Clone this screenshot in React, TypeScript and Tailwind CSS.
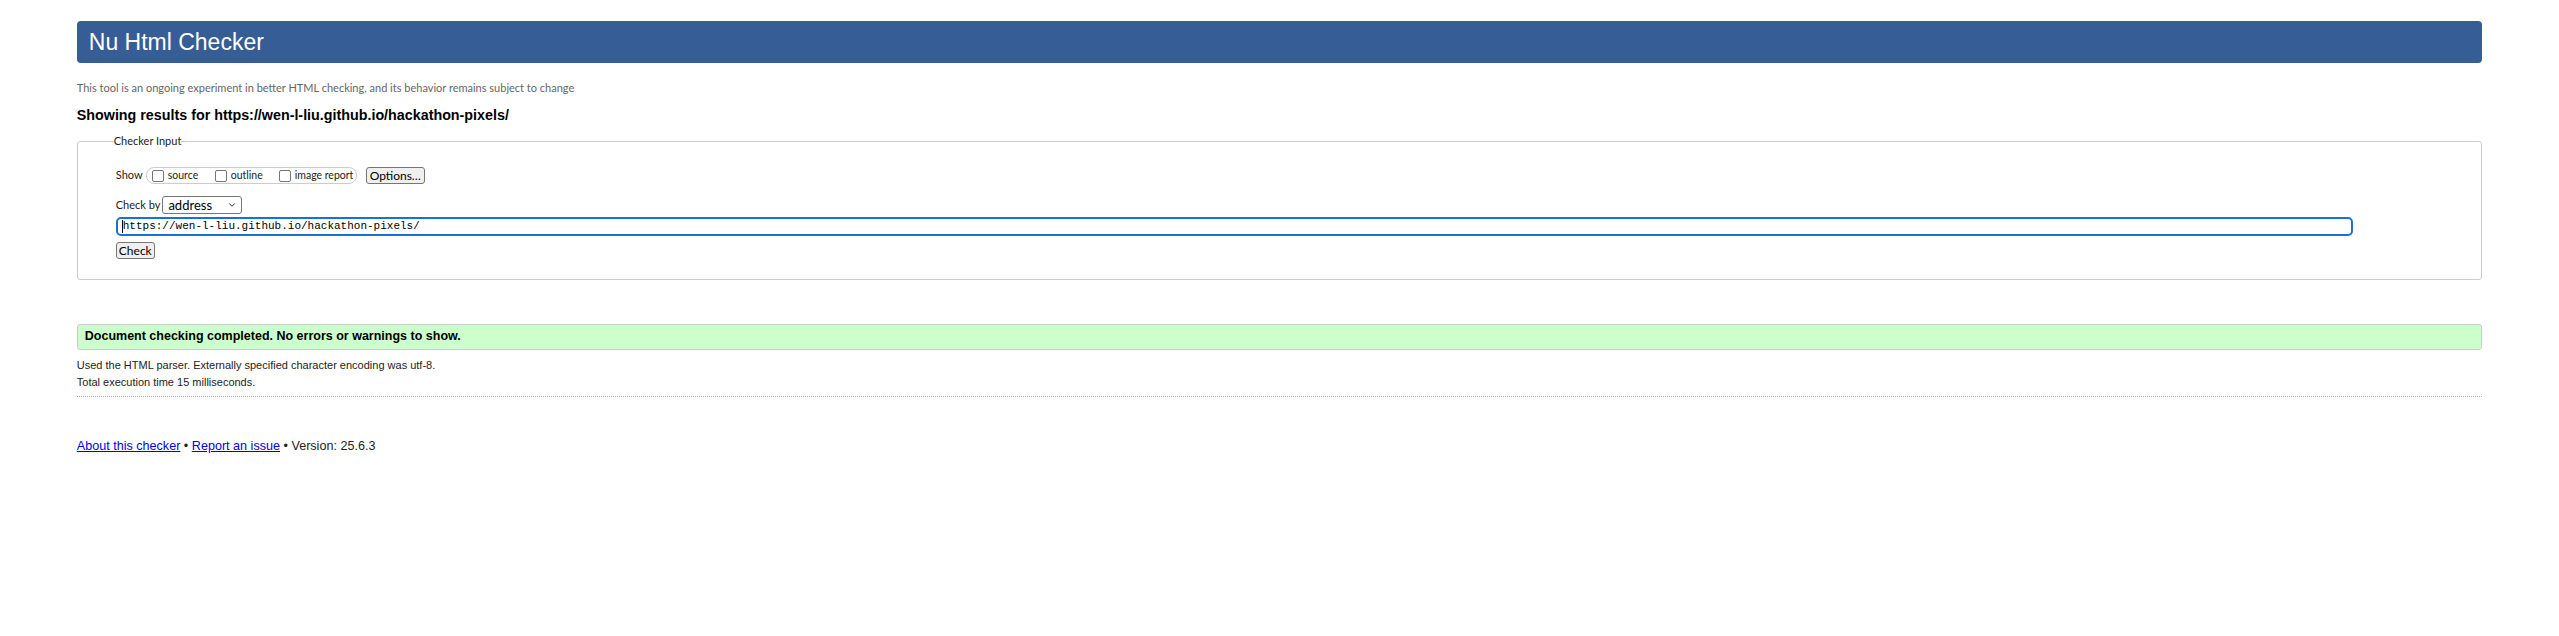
import { ChevronDown } from "lucide-react";

const arial = "font-['Liberation_Sans',Arial,sans-serif]";
const ui = "font-['Lato','Noto_Sans',sans-serif]";

function ShowOption({ label, width }: { label: string; width: string }) {
  return (
    <label className="flex items-center">
      <span className="inline-block h-[12px] w-[12px] rounded-[2px] border border-[#767676] bg-white" />
      <span className={`ml-[4px] whitespace-nowrap text-[10.5px] leading-none text-[#222] ${width}`}>{label}</span>
    </label>
  );
}

export default function App() {
  return (
    <div className={`min-h-screen bg-white px-[3%] pt-[21px] text-black ${arial}`}>
      <h1 className="h-[42px] rounded-[4px] bg-[#365d95] pl-[12px] text-[23px] leading-[42px] text-white">
        Nu Html Checker
      </h1>

      <p className={`mt-[17px] text-[11px] leading-[16px] text-[#666] ${ui}`}>
        This tool is an ongoing experiment in better HTML checking, and its behavior remains subject to change
      </p>

      <h2 className="mt-[10px] text-[14.3px] font-bold leading-[18px]">
        Showing results for https://wen-l-liu.github.io/hackathon-pixels/
      </h2>

      <fieldset className="mt-[10px] rounded-[3px] border border-[#ccc] pb-[17px] pl-[38px] pr-[128px]">
        <legend className={`-ml-[2px] text-[11px] leading-[14px] text-[#222] ${ui}`}>Checker Input</legend>

        <div className={`mt-[19px] flex items-center ${ui}`}>
          <span className="w-[26px] text-[11px] text-[#222]">Show</span>
          <div className="ml-[4px] flex h-[17px] items-center gap-[18px] rounded-[8px] border border-[#ccc] pl-[5px] pr-[5px]">
            <ShowOption label="source" width="w-[29px]" />
            <ShowOption label="outline" width="w-[30px]" />
            <ShowOption label="image report" width="w-[56px]" />
          </div>
          <button className="ml-[9px] h-[17px] w-[59px] rounded-[3px] border border-[#767676] bg-[#efefef] text-[12px] leading-none text-black">
            Options…
          </button>
        </div>

        <div className={`mt-[12px] flex items-center ${ui}`}>
          <span className="text-[11px] text-[#222]">Check by</span>
          <div className="ml-[2px] flex h-[18px] w-[80px] items-center justify-between rounded-[3px] border border-[#767676] bg-white pl-[5px] pr-[4px]">
            <span className="text-[13px] leading-none text-black">address</span>
            <ChevronDown className="h-[10px] w-[10px] text-black" strokeWidth={2} />
          </div>
        </div>

        <div className="mt-[3px] flex h-[19px] items-center rounded-[5px] border-2 border-[#1a6fd8] bg-white pl-[4px]">
          <span className="h-[13px] w-px bg-black" />
          <span className="font-['Liberation_Mono',monospace] text-[11px] leading-none text-black">
            https://wen-l-liu.github.io/hackathon-pixels/
          </span>
        </div>

        <button className={`mt-[6px] h-[17px] w-[39px] rounded-[3px] border border-[#767676] bg-[#efefef] text-[12px] leading-none text-black ${ui}`}>
          Check
        </button>
      </fieldset>

      <div className="mt-[44px] flex h-[26px] items-center rounded-[3px] border border-[#ccc] bg-[#ccffcc] pl-[7px]">
        <p className="text-[12.5px] font-bold leading-none">Document checking completed. No errors or warnings to show.</p>
      </div>

      <div className="mt-[7px] text-[11px] leading-[17px] text-[#222]">
        <p>Used the HTML parser. Externally specified character encoding was utf-8.</p>
        <p>Total execution time 15 milliseconds.</p>
      </div>

      <hr className="mt-[5px] border-0 border-t border-dotted border-[#aaa]" />

      <p className="mt-[41px] text-[12.6px] leading-[16px] text-[#222]">
        <a href="#" className="text-[#0000ee] underline">About this checker</a>
        {" • "}
        <a href="#" className="text-[#0000ee] underline">Report an issue</a>
        {" • Version: 25.6.3"}
      </p>
    </div>
  );
}
